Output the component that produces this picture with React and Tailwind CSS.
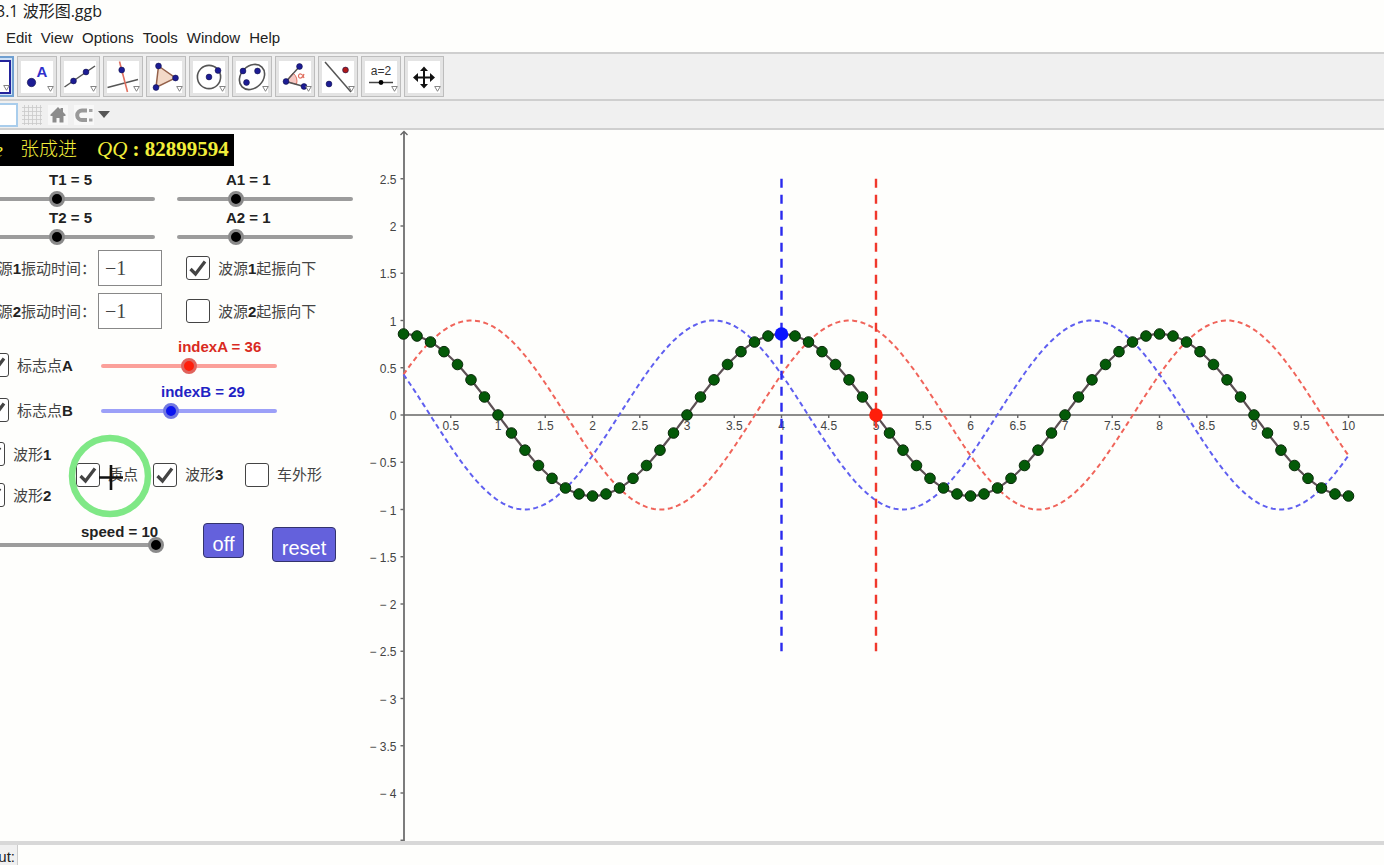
import { useState } from 'react';

const menus = ['Edit', 'View', 'Options', 'Tools', 'Window', 'Help'];

const NAVY = '#1c1c94';

function Dot({ x, y, r = 2.9, fill = NAVY }) {
  return <circle cx={x} cy={y} r={r} fill={fill} stroke="#10104a" strokeWidth="0.6" />;
}

// every drawing uses a 32 x 32 box
const tools = [
  {
    name: 'Move',
    icon: <path d="M16 18h5" stroke="#e0506a" strokeWidth="2" />
  },
  {
    name: 'Point',
    icon: (
      <>
        <Dot x={10.5} y={21.5} r={4.2} />
        <text x="21" y="16" textAnchor="middle" fontSize="15" fontWeight="bold" fill="#3030cc">A</text>
      </>
    )
  },
  {
    name: 'Line',
    icon: (
      <>
        <path d="M0.500 26 31 5" stroke="#555" strokeWidth="1.500" />
        <Dot x={9.5} y={20} />
        <Dot x={22} y={11} />
      </>
    )
  },
  {
    name: 'Perpendicular line',
    icon: (
      <>
        <path d="M0.500 26.500 31 18.500" stroke="#555" strokeWidth="1.500" />
        <path d="M12.500 0.500 20.500 31" stroke="#e07060" strokeWidth="1.600" />
        <Dot x={14.7} y={9} />
      </>
    )
  },
  {
    name: 'Polygon',
    icon: (
      <>
        <path d="M8.500 5 25.500 17 6 26.500Z" fill="#f3d9c8" stroke="#94614a" strokeWidth="1.500" />
        <Dot x={8.5} y={5} />
        <Dot x={25.5} y={17} />
        <Dot x={6} y={26.5} />
      </>
    )
  },
  {
    name: 'Circle',
    icon: (
      <>
        <circle cx="16" cy="16" r="11.6" fill="none" stroke="#555" strokeWidth="1.600" />
        <Dot x={16} y={16} />
        <Dot x={25} y={9.5} />
      </>
    )
  },
  {
    name: 'Ellipse',
    icon: (
      <>
        <ellipse cx="16" cy="16" rx="14" ry="11" transform="rotate(-45 16 16)" fill="none" stroke="#555" strokeWidth="1.600" />
        <Dot x={7} y={10} />
        <Dot x={21.5} y={10} />
        <Dot x={10.5} y={21.5} />
      </>
    )
  },
  {
    name: 'Angle',
    icon: (
      <>
        <path d="M7 20.500 14 12A11 11 0 0 1 17.500 23.300Z" fill="#f7c9c4" stroke="#e07060" />
        <path d="M20.500 5.500 7 20.500 25 25.500" fill="none" stroke="#555" strokeWidth="1.500" />
        <path d="M25 13c-1.500 5-5.500 5-5.500 2s4-3 5.500 2" fill="none" stroke="#e07060" strokeWidth="1.2" />
        <Dot x={20.5} y={5.5} />
        <Dot x={7} y={20.5} />
        <Dot x={25} y={25.5} />
      </>
    )
  },
  {
    name: 'Reflect',
    icon: (
      <>
        <path d="M3 1 29 31" stroke="#555" strokeWidth="1.500" />
        <Dot x={7} y={23} />
        <Dot x={23.5} y={9} fill="#b01818" />
      </>
    )
  },
  {
    name: 'Slider',
    icon: (
      <>
        <text x="16" y="14" textAnchor="middle" fontSize="12" fill="#333">a=2</text>
        <path d="M4 21.500h24" stroke="#444" strokeWidth="1.500" />
        <circle cx="16" cy="21.500" r="2.400" />
      </>
    )
  },
  {
    name: 'Move view',
    icon: (
      <path
        d="M16 5.500 20 10H17v5.500h5v-3.500l5 4.500-5 4.500v-3.500h-5v5.500h3l-4 4.500-4-4.500h3v-5.500h-5v3.500l-5-4.500 5-4.500v3.500h5V10h-3z"
        fill="#111"
      />
    )
  }
];

function ToolButton({ tool, selected }) {
  return (
    <button
      aria-label={tool.name}
      className={`relative flex h-[41px] w-10 shrink-0 items-center justify-center border ${
        selected ? 'border-2 border-[#6f9fd0] bg-[#cfe2f7]' : 'border-[#bdbdbd] bg-[#e4e4e4]'
      }`}
    >
      <svg
        viewBox="0 0 32 32"
        className={`bg-white ${selected ? 'size-[30px] outline-2 outline-[#23239c]' : 'size-8'}`}
      >
        {tool.icon}
      </svg>
      <svg viewBox="0 0 7 6" className="absolute right-0.5 bottom-1 h-1.5 w-[7px]">
        <path d="M0.700 0.500h5.600L3.500 5.300z" fill="#fff" stroke="#777" strokeWidth="0.9" />
      </svg>
    </button>
  );
}

const tones = {
  black: {
    text: 'text-[#222]',
    bar: 'bg-[#9c9c9c]',
    thumb: '[&::-webkit-slider-thumb]:border-[#8a8a8a] [&::-webkit-slider-thumb]:bg-black'
  },
  red: {
    text: 'text-[#d92a22]',
    bar: 'bg-[#fba09a]',
    thumb: '[&::-webkit-slider-thumb]:border-[#e0635c] [&::-webkit-slider-thumb]:bg-[#ff1e0a]'
  },
  blue: {
    text: 'text-[#2222c4]',
    bar: 'bg-[#9ca0f8]',
    thumb: '[&::-webkit-slider-thumb]:border-[#7278e0] [&::-webkit-slider-thumb]:bg-[#0a14f0]'
  }
};

function Slider({ name, initial, min, max, tone = 'black', labelClass, tight = false }) {
  const [value, setValue] = useState(initial);
  const t = tones[tone];

  return (
    <div className="flex w-[192px] shrink-0 flex-col">
      <label
        htmlFor={name}
        className={`text-[15px] font-bold whitespace-nowrap ${tight ? 'leading-[18px]' : 'leading-5'} ${t.text} ${labelClass}`}
      >
        {name} = {value}
      </label>
      <div className={`relative flex h-[18px] items-center ${tight ? '-mt-[5px]' : ''}`}>
        <span className={`absolute inset-x-2 h-1 rounded-full ${t.bar}`} />
        <input
          id={name}
          type="range"
          min={min}
          max={max}
          value={value}
          onChange={(e) => setValue(Number(e.target.value))}
          className={`relative h-4 w-full appearance-none bg-transparent [&::-webkit-slider-thumb]:size-4 [&::-webkit-slider-thumb]:appearance-none [&::-webkit-slider-thumb]:rounded-full [&::-webkit-slider-thumb]:border-[3px] ${t.thumb}`}
        />
      </div>
    </div>
  );
}

function Checkbox({ checked = false, children }) {
  return (
    <label className="flex h-6 shrink-0 items-center gap-2 text-[15px] whitespace-nowrap text-[#444]">
      <span className="relative flex size-6">
        <input
          type="checkbox"
          defaultChecked={checked}
          className="peer size-6 appearance-none rounded-[3px] border border-[#444] bg-white"
        />
        <svg viewBox="0 0 24 24" className="pointer-events-none absolute inset-0 hidden size-6 peer-checked:block">
          <path d="M4.500 13 9.500 18 19 5.500" fill="none" stroke="#444" strokeWidth="3.200" />
        </svg>
      </span>
      <span className="pt-0.5">{children}</span>
    </label>
  );
}

function TimeInput({ n }) {
  return (
    <>
      <label
        htmlFor={`time${n}`}
        className="flex w-[98px] shrink-0 justify-end pt-0.5 pr-0.5 text-[15px] whitespace-nowrap text-[#444]"
      >
        波源<b className="text-[#222]">{n}</b>振动时间：
      </label>
      <input
        id={`time${n}`}
        type="text"
        defaultValue="−1"
        className="h-9 w-16 shrink-0 border border-[#888] bg-white px-1.5 font-['Liberation_Serif',serif] text-xl text-[#444]"
      />
    </>
  );
}

// graph geometry, in pixels
const UNIT = 94.5;
const X0 = 43.5;
const Y0 = 285;
const SHIFT = 0.282;
const px = (x) => X0 + x * UNIT;
const py = (y) => Y0 - y * UNIT;

const wave1 = (x) => Math.sin((Math.PI / 2) * (x + SHIFT));
const wave2 = (x) => Math.cos((Math.PI / 2) * (x - 3 - SHIFT));
const wave3 = (x) => wave1(x) + wave2(x);

function curve(fn) {
  const points = [];
  for (let i = 0; i <= 400; i++) {
    const x = i / 40;
    points.push(`${px(x).toFixed(1)},${py(fn(x)).toFixed(1)}`);
  }
  return points.join(' ');
}

function Graph() {
  const xTicks = Array.from({ length: 20 }, (_, i) => (i + 1) / 2);
  const yTicks = Array.from({ length: 15 }, (_, i) => 2.5 - i / 2);
  const particles = Array.from({ length: 71 }, (_, i) => i / 7);

  return (
    <svg className="h-full min-w-0 flex-1 text-xs" role="img" aria-label="Graphics view">
      <g stroke="#666" strokeWidth="1.4">
        <line x1={X0} y1={py(0)} x2="100%" y2={py(0)} />
        <line x1={X0 + 0.5} y1="2" x2={X0 + 0.5} y2="100%" strokeWidth="1.700" />
        <path d={`M${X0 - 3} 5 L${X0 + 0.5} 1.500 L${X0 + 4} 5`} fill="none" />
        {xTicks.map((x) => (
          <line key={x} x1={px(x)} y1={Y0} x2={px(x)} y2={Y0 + 3} />
        ))}
        {yTicks.map((y) => (
          <line key={y} x1={X0 - 3} y1={py(y)} x2={X0} y2={py(y)} />
        ))}
      </g>
      <g fill="#444">
        {xTicks.map((x) => (
          <text key={x} x={px(x)} y={Y0 + 15} textAnchor="middle">{x}</text>
        ))}
        {yTicks.slice(0, -1).map((y) => (
          <text key={y} x={X0 - 7} y={py(y) + 5} textAnchor="end">{y < 0 ? `− ${-y}` : y}</text>
        ))}
      </g>

      <polyline points={curve(wave1)} fill="none" stroke="#f0645a" strokeWidth="2" strokeDasharray="5 3.500" />
      <polyline points={curve(wave2)} fill="none" stroke="#5f5ff0" strokeWidth="2" strokeDasharray="5 3.500" />
      <polyline points={curve(wave3)} fill="none" stroke="#5c5054" strokeWidth="2.200" />
      <line x1={px(4)} y1={py(2.5)} x2={px(4)} y2={py(-2.5)} stroke="#2a2aee" strokeWidth="2.400" strokeDasharray="9 7" />
      <line x1={px(5)} y1={py(2.5)} x2={px(5)} y2={py(-2.5)} stroke="#f0382c" strokeWidth="2.400" strokeDasharray="9 7" />

      {particles.map((x) => (
        <circle key={x} cx={px(x)} cy={py(wave3(x))} r="5.300" fill="#045a08" stroke="#0a2a0a" strokeWidth="1" />
      ))}
      <circle cx={px(4)} cy={py(wave3(4))} r="6.800" fill="#0a14ff" />
      <circle cx={px(5)} cy={py(wave3(5))} r="6.800" fill="#ff1e0a" />
    </svg>
  );
}

function StyleBar() {
  return (
    <div className="flex h-[29px] items-center border-b-2 border-[#cfcfcf] bg-[#f0f0f0]">
      <button aria-label="Graphics" className="h-6 w-[18px] border-2 border-l-0 border-[#a9cdec] bg-white" />
      <button aria-label="Grid" className="ml-1">
        <svg viewBox="0 0 20 20" className="size-5">
          <path
            d="M2.500 0v20M6.500 0v20M10.500 0v20M14.500 0v20M18.500 0v20M0 2.500h20M0 6.500h20M0 10.500h20M0 14.500h20M0 18.500h20"
            stroke="#c9c9c9"
            strokeWidth="0.8"
          />
        </svg>
      </button>
      <button aria-label="Home" className="ml-1.5 bg-[#f8f8f8]">
        <svg viewBox="0 0 20 20" className="size-5">
          <path d="M10 2 2.500 9.500V11h2v6.500h4v-4.500h3v4.500h4V11h2V9.500L15 7V3h-2.500v1.500z" fill="#8c8c8c" />
        </svg>
      </button>
      <button aria-label="Point capturing" className="ml-1.5 flex items-center gap-1">
        <svg viewBox="0 0 20 20" className="size-5 bg-[#f8f8f8]">
          <path d="M13 5.500H8a4.800 4.800 0 0 0 0 9.600h5" fill="none" stroke="#999" strokeWidth="4" />
          <path d="M15 5.500h3.500M15 15.100h3.500" stroke="#a5a5a5" strokeWidth="3" />
        </svg>
        <svg viewBox="0 0 12 7" className="h-[7px] w-3">
          <path d="M0 0h12L6 7z" fill="#555" />
        </svg>
      </button>
    </div>
  );
}

export default function App() {
  return (
    <div className="flex h-screen flex-col overflow-hidden bg-[#fefefc] font-['Liberation_Sans','Noto_Sans_CJK_SC',sans-serif] text-[#222]">
      <header>
        <h1 className="-ml-1 font-['Open_Sans','Noto_Sans_CJK_SC',sans-serif] text-base leading-[22px] whitespace-pre">
          3.1 波形图.ggb
        </h1>
        <nav className="flex h-[30px] items-center gap-[9px] pt-0.5 pl-1.5 text-[15px]">
          {menus.map((menu) => (
            <button key={menu}>{menu}</button>
          ))}
        </nav>
        <div className="flex h-[49px] items-center border-y-2 border-[#cfcfcf] bg-[#f0f0f0]">
          <div className="-ml-[26px] flex gap-[3px]">
            {tools.map((tool, i) => (
              <ToolButton key={tool.name} tool={tool} selected={i === 0} />
            ))}
          </div>
        </div>
        <StyleBar />
      </header>

      <main className="flex min-h-0 flex-1">
        <section className="w-[360px] shrink-0 overflow-hidden pt-1">
          <div className="flex h-8 w-[234px] items-center bg-black font-['Liberation_Serif','Noto_Sans_CJK_SC',serif] text-[#f2ee3a]">
            <i className="-ml-1.5 w-[26px] text-xl">e</i>
            <span className="text-[19px] font-light">张成进</span>
            <span className="ml-5 text-[21px] font-bold whitespace-nowrap">
              <i className="font-normal">QQ</i> : 82899594
            </span>
          </div>

          <div className="-ml-[29px] flex flex-col pt-1">
            <div className="flex gap-1.5">
              <Slider name="T1" initial={5} min={1} max={10} labelClass="pl-[78px]" />
              <Slider name="A1" initial={1} min={0} max={3} labelClass="pl-[57px]" />
            </div>
            <div className="flex gap-1.5">
              <Slider name="T2" initial={5} min={1} max={10} labelClass="pl-[78px]" />
              <Slider name="A2" initial={1} min={0} max={3} labelClass="pl-[57px]" />
            </div>
          </div>

          <div className="mt-1 flex flex-col gap-[7px]">
            <div className="flex items-center">
              <TimeInput n={1} />
              <div className="ml-6">
                <Checkbox checked>波源<b className="text-[#222]">1</b>起振向下</Checkbox>
              </div>
            </div>
            <div className="flex items-center">
              <TimeInput n={2} />
              <div className="ml-6">
                <Checkbox>波源<b className="text-[#222]">2</b>起振向下</Checkbox>
              </div>
            </div>
          </div>

          <div className="-ml-[15px] mt-2 flex flex-col gap-[5px]">
            <div className="flex items-end">
              <div className="w-[108px]">
                <Checkbox checked>标志点<b className="text-[#222]">A</b></Checkbox>
              </div>
              <div className="pb-0.5">
                <Slider name="indexA" initial={36} min={1} max={71} tone="red" labelClass="pl-[85px]" />
              </div>
            </div>
            <div className="flex items-end">
              <div className="w-[108px]">
                <Checkbox checked>标志点<b className="text-[#222]">B</b></Checkbox>
              </div>
              <div className="pb-0.5">
                <Slider name="indexB" initial={29} min={1} max={71} tone="blue" labelClass="pl-[68px]" />
              </div>
            </div>
          </div>

          <div className="-ml-[19px] mt-5 flex items-center">
            <div className="flex w-[95px] shrink-0 flex-col gap-[17px]">
              <Checkbox checked>波形<b className="text-[#222]">1</b></Checkbox>
              <Checkbox checked>波形<b className="text-[#222]">2</b></Checkbox>
            </div>
            <div className="relative w-[77px] shrink-0">
              <Checkbox checked>质点</Checkbox>
              {/* pointer highlight */}
              <svg viewBox="0 0 84 84" className="pointer-events-none absolute -top-[29px] -left-2 size-[84px]">
                <circle cx="42" cy="42" r="38" fill="none" stroke="#7fe886" strokeWidth="6.500" />
                <path d="M31 43.500h24M43 31v25" stroke="#111" strokeWidth="2.600" />
              </svg>
            </div>
            <div className="w-[92px] shrink-0">
              <Checkbox checked>波形<b className="text-[#222]">3</b></Checkbox>
            </div>
            <Checkbox>车外形</Checkbox>
          </div>

          <div className="-ml-7 mt-4 flex items-start">
            <Slider name="speed" initial={10} min={0} max={10} tight labelClass="pl-[109px]" />
            <button className="ml-[39px] h-[35px] w-[41px] shrink-0 rounded-[4px] border border-[#33336c] bg-[#6461dc] pt-1.5 text-xl leading-7 text-white">
              off
            </button>
            <button className="mt-1 ml-7 h-[35px] w-16 shrink-0 rounded-[4px] border border-[#33336c] bg-[#6461dc] pt-1.5 text-xl leading-7 text-white">
              reset
            </button>
          </div>
        </section>
        <Graph />
      </main>

      <footer className="flex h-6 shrink-0 items-stretch border-t-4 border-[#d8d8d8] bg-[#f0f0f0]">
        <label htmlFor="command" className="flex w-[18px] items-end justify-end border-r border-[#ccc] pr-0.5 text-[15px] leading-4">
          Input:
        </label>
        <input id="command" type="text" className="min-w-0 flex-1 bg-[#fefefc] px-1 outline-none" />
      </footer>
    </div>
  );
}
